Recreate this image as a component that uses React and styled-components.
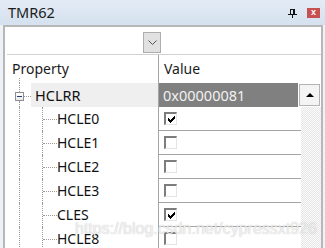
import React from 'react';
import styled, { createGlobalStyle } from 'styled-components';

const GlobalStyle = createGlobalStyle`
  html, body {
    margin: 0;
    padding: 0;
  }
  body {
    width: 325px;
    height: 248px;
    overflow: hidden;
    background: #eef2f7;
    font-family: "Noto Sans", "Liberation Sans", sans-serif;
  }
`

const Window = styled.div`
  position: relative;
  display: flex;
  flex-direction: column;
  width: 325px;
  height: 248px;
  overflow: hidden;
  background: #eef2f7;
`
const TitleBar = styled.div`
  flex: none;
  height: 25px;
  display: flex;
  align-items: center;
  padding: 0 5px 0 8px;
  box-sizing: border-box;
  background: linear-gradient(#e3ebf5, #d5e1ef);
`
const Title = styled.span`
  flex: 1;
  font-size: 14.5px;
  color: #1b1b1b;
  line-height: 25px;
`
const Pin = styled.svg`
  width: 9px;
  height: 9px;
  margin-top: 1px;
`
const Close = styled.div`
  width: 13px;
  height: 10px;
  margin-left: 10px;
  margin-top: 1px;
  background: #c75050;
  color: #fff;
  font-family: "Liberation Sans", sans-serif;
  font-size: 9px;
  font-weight: bold;
  line-height: 9px;
  text-align: center;
`
const Panel = styled.div`
  flex: 1;
  display: flex;
  flex-direction: column;
  margin: 0 2px 0 3px;
  border: 2px solid #b7b7b7;
  border-bottom: none;
  background: #fff;
`
const Toolbar = styled.div`
  flex: none;
  height: 27px;
  box-sizing: border-box;
  padding: 5px 0 0 138px;
`
const ComboButton = styled.div`
  width: 18px;
  height: 21px;
  box-sizing: border-box;
  border: 1px solid #adadad;
  background: #e1e1e1;
  display: flex;
  align-items: center;
  justify-content: center;
`
const Grid = styled.div`
  margin-left: 2px;
  border-top: 1px solid #d2d2d2;
`
const HeaderRow = styled.div`
  display: grid;
  grid-template-columns: 151px 163px;
  height: 28px;
  font-size: 14px;
  color: #1b1b1b;
`
const HeaderName = styled.div`
  padding-left: 5px;
  line-height: 28px;
  background: repeating-linear-gradient(to bottom, #9a9a9a 0 1px, transparent 1px 2px) 12px 23px / 1px 5px no-repeat;
`
const HeaderValue = styled.div`
  padding-left: 5px;
  line-height: 28px;
  border-left: 1px solid #a5a5a5;
`
const Row = styled.div`
  display: grid;
  grid-template-columns: 151px 143px 20px;
  height: 24px;
`
const NameCell = styled.div`
  display: flex;
  align-items: stretch;
  font-size: ${p => p.$size}px;
  color: #111;
`
const Rail = styled.div`
  flex: none;
  display: flex;
  align-items: center;
  margin-left: ${p => p.$offset}px;
  width: ${p => p.$width}px;
  border-left: 1px dotted #9a9a9a;
`
const Connector = styled.div`
  width: ${p => p.$width}px;
  height: 0;
  border-top: 1px dotted #9a9a9a;
`
const Label = styled.span`
  line-height: 24px;
  padding-left: ${p => p.$pad}px;
  flex: ${p => (p.$fill ? 1 : 'none')};
  background: ${p => (p.$fill ? '#efefef' : 'transparent')};
`
const ToggleLane = styled.div`
  flex: none;
  width: 16px;
  margin-left: 8px;
  display: flex;
  flex-direction: column;
`
const LaneLine = styled.div`
  height: ${p => (p.$h ? `${p.$h}px` : 'auto')};
  flex: ${p => (p.$h ? 'none' : 1)};
  margin-left: 4px;
  border-left: 1px dotted #9a9a9a;
`
const ToggleRow = styled.div`
  display: flex;
  align-items: center;
  height: 9px;
`
const ToggleBox = styled.div`
  flex: none;
  width: 9px;
  height: 9px;
  box-sizing: border-box;
  border: 1px solid #8e8e8e;
  background: linear-gradient(#ffffff, #e9e9e9);
  display: flex;
  align-items: center;
  justify-content: center;
`
const Minus = styled.div`
  width: 5px;
  height: 1px;
  background: #1f3f73;
`
const ValueCell = styled.div`
  display: flex;
  align-items: center;
  padding-left: 5px;
  border-left: 1px solid #a5a5a5;
  border-bottom: 1px solid #a5a5a5;
`
const Gutter = styled.div`
  background-color: #f7f7f7;
  background-image: repeating-conic-gradient(#e6e6e6 0 25%, #fbfbfb 0 50%);
  background-size: 2px 2px;
`
const SelectedValue = styled.div`
  grid-column: 2 / 4;
  display: flex;
`
const DarkValue = styled.div`
  flex: 1;
  border-left: 1px solid #a5a5a5;
  background: #808080;
  color: #f2f2f2;
  font-size: 14.5px;
  line-height: 24px;
  padding-left: 4px;
`
const SpinButton = styled.div`
  flex: none;
  width: 21px;
  height: 22px;
  margin: 1px 1px 0 1px;
  box-sizing: border-box;
  border: 1px solid #b4b4b4;
  background: #f4f4f4;
  display: flex;
  align-items: center;
  justify-content: center;
  &::after {
    content: "";
    border-left: 4px solid transparent;
    border-right: 4px solid transparent;
    border-bottom: 4px solid #000;
  }
`
const CheckBox = styled.div`
  width: 13px;
  height: 13px;
  box-sizing: border-box;
  border-top: 2px solid #7d7d7d;
  border-left: 2px solid #7d7d7d;
  border-right: 1px solid #e4e4e4;
  border-bottom: 1px solid #e4e4e4;
  background: #fff;
  display: flex;
  align-items: center;
  justify-content: center;
`
const Watermark = styled.div`
  position: absolute;
  left: 75px;
  top: 220px;
  font-family: "Liberation Sans", sans-serif;
  font-size: 16px;
  color: rgba(255, 255, 255, 0.75);
  text-shadow: 0 0 1px rgba(110, 110, 110, 0.5);
  white-space: nowrap;
  pointer-events: none;
`

const fields = [
  { name: 'HCLE0', on: true },
  { name: 'HCLE1', on: false },
  { name: 'HCLE2', on: false },
  { name: 'HCLE3', on: false },
  { name: 'CLES', on: true },
  { name: 'HCLE8', on: false },
];

function Check({ on }) {
  return (
    <CheckBox>
      {on && (
        <svg width="7" height="7" viewBox="0 0 7 7" shapeRendering="crispEdges">
          <path
            d="M6 0h1v1h-1z M5 1h2v1h-2z M0 2h1v1h-1z M4 2h3v1h-3z M0 3h2v1h-2z M3 3h3v1h-3z M0 4h5v1h-5z M1 5h3v1h-3z M2 6h1v1h-1z"
            fill="#000"
          />
        </svg>
      )}
    </CheckBox>
  );
}

export default function App() {
  return (
    <Window>
      <GlobalStyle />
      <TitleBar>
        <Title>TMR62</Title>
        <Pin viewBox="0 0 9 9" shapeRendering="crispEdges">
          <path d="M2 0h5v5H6V1H3v4H2z M5 1h1v4H5z M0 5h9v1H0z M4 6h1v3H4z" fill="#111" />
        </Pin>
        <Close>x</Close>
      </TitleBar>
      <Panel>
        <Toolbar>
          <ComboButton>
            <svg width="9" height="5" viewBox="0 0 9 5">
              <path d="M0.5 0.5l4 4l4-4" fill="none" stroke="#555" strokeWidth="1" />
            </svg>
          </ComboButton>
        </Toolbar>
        <Grid>
          <HeaderRow>
            <HeaderName>Property</HeaderName>
            <HeaderValue>Value</HeaderValue>
          </HeaderRow>
          <Row>
            <NameCell $size={14.5}>
              <ToggleLane>
                <LaneLine $h={9} />
                <ToggleRow>
                  <ToggleBox><Minus /></ToggleBox>
                  <Connector $width={7} />
                </ToggleRow>
                <LaneLine />
              </ToggleLane>
              <Label $pad={4} $fill>HCLRR</Label>
            </NameCell>
            <SelectedValue>
              <DarkValue>0x00000081</DarkValue>
              <SpinButton />
            </SelectedValue>
          </Row>
          {fields.map(f => (
            <Row key={f.name}>
              <NameCell $size={14}>
                <Rail $offset={12} $width={11} />
                <Rail $offset={11} $width={14}>
                  <Connector $width={14} />
                </Rail>
                <Label $pad={0}>{f.name}</Label>
              </NameCell>
              <ValueCell>
                <Check on={f.on} />
              </ValueCell>
              <Gutter />
            </Row>
          ))}
        </Grid>
      </Panel>
      <Watermark>https://blog.csdn.net/cypressxt926</Watermark>
    </Window>
  );
}
